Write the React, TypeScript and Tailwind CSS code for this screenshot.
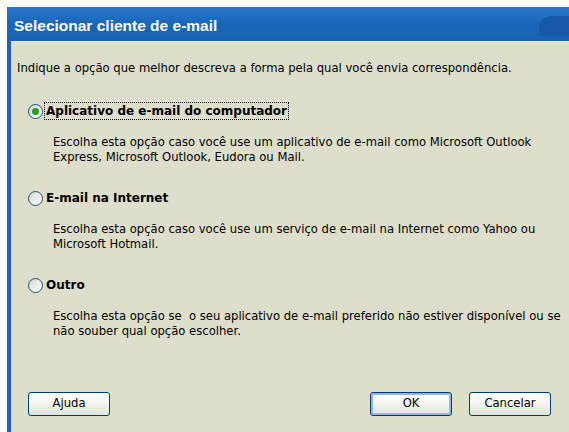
import { useState } from "react";

const FONT = { fontFamily: '"DejaVu Sans", Tahoma, sans-serif' };

type Option = {
	id: string;
	label: string;
	lines: string[];
};

const OPTIONS: Option[] = [
	{
		id: "desktop",
		label: "Aplicativo de e-mail do computador",
		lines: [
			"Escolha esta opção caso você use um aplicativo de e-mail como Microsoft Outlook",
			"Express, Microsoft Outlook, Eudora ou Mail.",
		],
	},
	{
		id: "web",
		label: "E-mail na Internet",
		lines: [
			"Escolha esta opção caso você use um serviço de e-mail na Internet como Yahoo ou",
			"Microsoft Hotmail.",
		],
	},
	{
		id: "other",
		label: "Outro",
		lines: [
			"Escolha esta opção se  o seu aplicativo de e-mail preferido não estiver disponível ou se",
			"não souber qual opção escolher.",
		],
	},
];

function Radio({ checked }: { checked: boolean }) {
	return (
		<span className="flex h-[15px] w-[15px] shrink-0 items-center justify-center rounded-full border border-[#1c5180] bg-gradient-to-br from-[#d6d6cc] to-white">
			{checked && <span className="h-[7px] w-[7px] rounded-full bg-[#21a121]" />}
		</span>
	);
}

function XpButton({ children, isDefault }: { children: string; isDefault?: boolean }) {
	return (
		<button
			type="button"
			className={`h-[24px] w-[82px] rounded-[3px] border border-[#003c74] bg-gradient-to-b from-white via-[#f4f4f0] to-[#e3e3db] text-[11.6px] text-black ${isDefault ? "shadow-[inset_0_0_0_2px_#97b5e2]" : ""}`}
			style={FONT}
		>
			{children}
		</button>
	);
}

export default function App() {
	const [selected, setSelected] = useState("desktop");

	return (
		<div className="h-[432px] w-[569px] overflow-hidden bg-white pl-[7px] pt-[7px]" style={FONT}>
			<div className="flex h-full flex-col rounded-tl-[6px] bg-[#1665b6]">
				{/* title bar */}
				<div className="flex h-[34px] items-center bg-gradient-to-b from-[#2a78cc] via-[#1766b8] to-[#1a62b0] pl-[7px] pt-[3px]">
					<span
						className="text-[15.5px] font-bold text-white"
						style={{ fontFamily: '"Liberation Sans", Arial, sans-serif' }}
					>
						Selecionar cliente de e-mail
					</span>
					{/* edge of the close button */}
					<span className="ml-auto h-[20px] w-[30px] rounded-tl-[12px] rounded-bl-[4px] bg-[#1858aa]" />
				</div>

				<div className="ml-[4px] flex flex-1 flex-col border-t border-[#f0ecd8] bg-[#dddecb] text-[11.6px] text-black">
					<p className="pl-[6px] pt-[19px] leading-[15px]">
						Indique a opção que melhor descreva a forma pela qual você envia correspondência.
					</p>

					<div className="mt-[27px] flex flex-col gap-[25px]">
						{OPTIONS.map((opt) => (
							<div key={opt.id}>
								<label
									className="flex cursor-pointer items-center gap-[2px] pl-[17px]"
									onClick={() => setSelected(opt.id)}
								>
									<Radio checked={selected === opt.id} />
									<span
										className={`px-[1px] text-[12px] font-bold leading-[16px] ${selected === opt.id ? "outline outline-1 outline-dotted outline-black" : ""}`}
									>
										{opt.label}
									</span>
								</label>
								<div className="mt-[16px] pl-[42px] leading-[15px]">
									{opt.lines.map((line) => (
										<p key={line} className="whitespace-pre">
											{line}
										</p>
									))}
								</div>
							</div>
						))}
					</div>

					<div className="mt-auto flex items-center pb-[16px] pl-[17px] pr-[18px]">
						<XpButton>Ajuda</XpButton>
						<div className="ml-auto flex gap-[17px]">
							<XpButton isDefault>OK</XpButton>
							<XpButton>Cancelar</XpButton>
						</div>
					</div>
				</div>
			</div>
		</div>
	);
}
